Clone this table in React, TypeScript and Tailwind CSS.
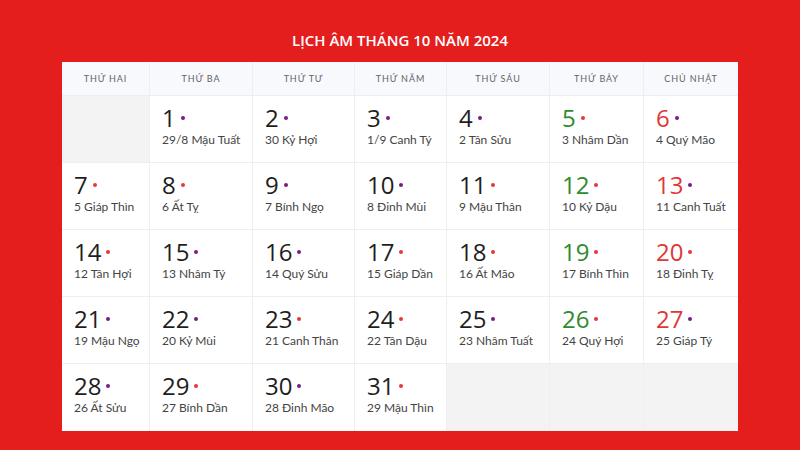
import React from 'react';

type Day = { d: number; lunar: string; dot: 'p' | 'r' };

const DAYS: Day[] = [
  { d: 1, lunar: '29/8 Mậu Tuất', dot: 'p' },
  { d: 2, lunar: '30 Kỷ Hợi', dot: 'p' },
  { d: 3, lunar: '1/9 Canh Tý', dot: 'p' },
  { d: 4, lunar: '2 Tân Sửu', dot: 'p' },
  { d: 5, lunar: '3 Nhâm Dần', dot: 'r' },
  { d: 6, lunar: '4 Quý Mão', dot: 'p' },
  { d: 7, lunar: '5 Giáp Thìn', dot: 'r' },
  { d: 8, lunar: '6 Ất Tỵ', dot: 'r' },
  { d: 9, lunar: '7 Bính Ngọ', dot: 'p' },
  { d: 10, lunar: '8 Đinh Mùi', dot: 'p' },
  { d: 11, lunar: '9 Mậu Thân', dot: 'r' },
  { d: 12, lunar: '10 Kỷ Dậu', dot: 'r' },
  { d: 13, lunar: '11 Canh Tuất', dot: 'p' },
  { d: 14, lunar: '12 Tân Hợi', dot: 'r' },
  { d: 15, lunar: '13 Nhâm Tý', dot: 'p' },
  { d: 16, lunar: '14 Quý Sửu', dot: 'p' },
  { d: 17, lunar: '15 Giáp Dần', dot: 'r' },
  { d: 18, lunar: '16 Ất Mão', dot: 'r' },
  { d: 19, lunar: '17 Bính Thìn', dot: 'r' },
  { d: 20, lunar: '18 Đinh Tỵ', dot: 'r' },
  { d: 21, lunar: '19 Mậu Ngọ', dot: 'p' },
  { d: 22, lunar: '20 Kỷ Mùi', dot: 'p' },
  { d: 23, lunar: '21 Canh Thân', dot: 'r' },
  { d: 24, lunar: '22 Tân Dậu', dot: 'r' },
  { d: 25, lunar: '23 Nhâm Tuất', dot: 'p' },
  { d: 26, lunar: '24 Quý Hợi', dot: 'r' },
  { d: 27, lunar: '25 Giáp Tý', dot: 'p' },
  { d: 28, lunar: '26 Ất Sửu', dot: 'p' },
  { d: 29, lunar: '27 Bính Dần', dot: 'r' },
  { d: 30, lunar: '28 Đinh Mão', dot: 'p' },
  { d: 31, lunar: '29 Mậu Thìn', dot: 'r' },
];

const WEEKDAYS = ['Thứ hai', 'Thứ ba', 'Thứ tư', 'Thứ năm', 'Thứ sáu', 'Thứ bảy', 'Chủ nhật'];

// October 2024 starts on a Tuesday, so one blank cell first and three at the end
const cells: (Day | null)[] = [null, ...DAYS, null, null, null];

export default function App() {
  return (
    <div className="w-[800px] h-[450px] bg-[#e41d1d] overflow-hidden font-['Open_Sans',sans-serif]">
      <h1 className="pt-[29px] h-[62px] text-center text-white text-[15px] font-semibold uppercase">
        Lịch âm tháng 10 năm 2024
      </h1>
      <div className="w-[676px] mx-auto bg-white grid grid-cols-[88px_103px_102px_92px_103px_94px_94px] font-['Lato',sans-serif]">
        {WEEKDAYS.map((w, i) => (
          <div
            key={w}
            className={`h-[34px] flex items-center justify-center bg-[#f8f9fc] border-b border-[#eceef2] text-[9px] uppercase tracking-[0.1em] text-[#5f6368] ${i < 6 ? 'border-r' : ''}`}
          >
            {w}
          </div>
        ))}
        {cells.map((c, i) => {
          const col = i % 7;
          const row = Math.floor(i / 7);
          const border = `${col < 6 ? 'border-r' : ''} ${row < 4 ? 'border-b' : ''} border-[#efefef]`;
          if (!c) return <div key={i} className={`h-[67px] bg-[#f3f3f3] ${border}`} />;
          const numColor = col === 5 ? 'text-[#2e8b2e]' : col === 6 ? 'text-[#e23636]' : 'text-[#1e1e1e]';
          return (
            <div key={i} className={`h-[67px] pl-[12px] pt-[8px] ${border}`}>
              <div className="flex items-center gap-[5px] h-[28px]">
                <span className={`font-['Open_Sans',sans-serif] text-[24px] leading-[28px] ${numColor}`}>{c.d}</span>
                <span className={`w-[4px] h-[4px] rounded-full mb-[1px] ${c.dot === 'p' ? 'bg-[#7a1b86]' : 'bg-[#e53935]'}`} />
              </div>
              <div className="text-[12px] leading-[16px] text-[#444]">{c.lunar}</div>
            </div>
          );
        })}
      </div>
    </div>
  );
}
